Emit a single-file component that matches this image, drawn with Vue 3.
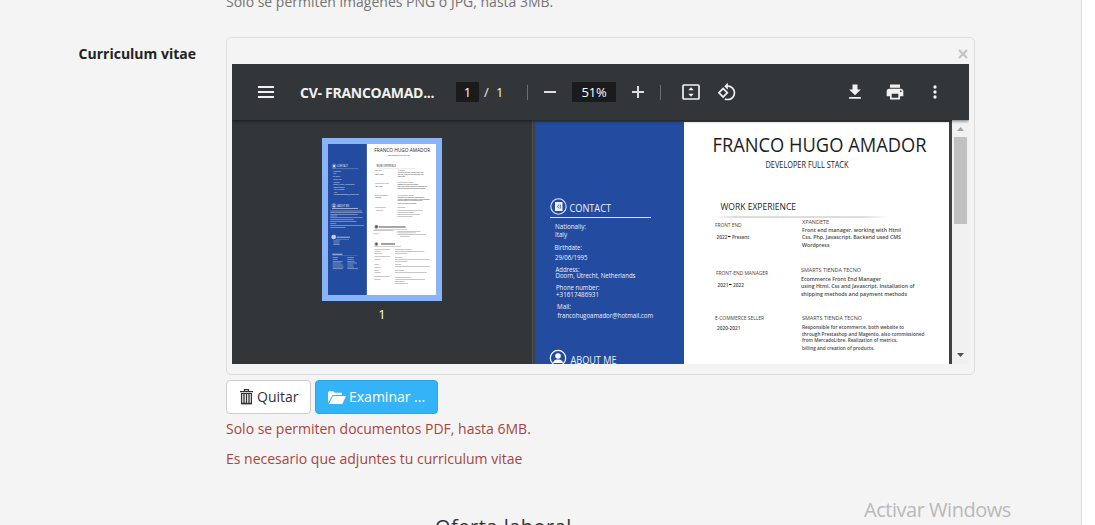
<script setup>
const contact = [
  ['Nationaliy:', 555, 229, 31],
  ['Italy', 555, 237, 12],
  ['Birthdate:', 554.5, 250, 27.5],
  ['29/06/1995', 555, 260, 32.5],
  ['Address:', 555.5, 272, 24],
  ['Doorn, Utrecht, Netherlands', 555.5, 278, 80],
  ['Phone number:', 556, 290, 43.5],
  ['+31617486931', 556, 297, 43],
  ['Mail:', 557, 309, 14],
  ['francohugoamador@hotmail.com', 557.5, 318, 95.5]
]

const roles = [
  ['FRONT END', 715, 227, 26.5],
  ['FRONT-END MANAGER', 716, 275, 52],
  ['E-COMMERCE SELLER', 715, 320, 49]
]

const jobs = [
  ['2022', 716.5, 239.2, 11],
  ['Present', 732, 239.2, 17],
  ['2021', 717.5, 287.2, 11],
  ['2022', 733, 287.2, 11],
  ['2020-2021', 717, 330.2, 23.5],
  ['Front end manager, working with Html', 802, 232, 99],
  ['Css, Php, Javascript. Backend used CMS', 802, 239, 99],
  ['Wordpress', 802, 247, 27.5],
  ['Ecommerce Front End Manager', 801, 281, 80],
  ['using Html, Css and Javascript. Installation of', 801, 288, 113.5],
  ['shipping methods and payment methods', 801, 296, 106],
  ['Responsible for ecommerce, both website to', 802, 329.3, 102],
  ['through Prestashop and Magento, also commissioned', 802, 335.5, 122.5],
  ['from MercadoLibre. Realization of metrics,', 802, 342.3, 95.5],
  ['billing and creation of products.', 802, 350.3, 72.5]
]

const companies = [
  ['XPANDETE', 802, 224.2, 27],
  ['SMARTS TIENDA TECNO', 801, 272.2, 60],
  ['SMARTS TIENDA TECNO', 802, 320.2, 60]
]

/* Lower part of the page: text lines as [x, y, width] */
const leftLines = [
  [61, -28, 95], [61, -24, 97], [61, -18, 82], [61, -13, 20], [61, -8, 97], [61, -2, 70],
  [61, 3, 78], [61, 9, 18], [61, 15, 101], [61, 21, 45],
  [70, 62, 20], [70, 68, 18], [70, 73, 19],
  [68, 112, 16], [68, 118, 15], [68, 124, 30], [68, 128, 26], [68, 134, 30], [68, 140, 33], [68, 145, 31],
  [112, 112, 20], [112, 118, 19], [112, 124, 22], [112, 128, 29], [112, 134, 18], [112, 140, 20], [112, 145, 32]
]

const rightLines = [
  [195, -38, 33], [197, -29, 22], [262, -38, 23], [262, -29, 76], [262, -23, 50], [262, -17, 68], [262, -11, 45],
  [189, 31, 61], [189, 41, 17], [262, 34, 70], [262, 38, 55], [262, 43, 85], [270, 49, 28],
  [193, 88, 47], [193, 94, 19], [193, 100, 24], [193, 109, 47], [193, 118, 19], [193, 133, 14],
  [193, 141, 19], [193, 151, 14], [193, 157, 19], [193, 169, 47], [193, 178, 19],
  [255, 88, 50], [255, 94, 88], [255, 100, 37], [255, 112, 22], [255, 118, 105], [255, 124, 37],
  [255, 133, 18], [255, 139, 105], [255, 151, 27], [255, 157, 95], [255, 172, 47], [255, 178, 90],
  [255, 184, 29], [255, 190, 39]
]
</script>

<template>
  <div class="page">
    <main class="panel">
      <p class="help first">Solo se permiten imágenes PNG o JPG, hasta 3MB.</p>
      <div class="row">
        <label class="label">Curriculum vitae</label>
        <div class="field">
          <div class="preview">
            <div class="close-row">
              <svg width="10" height="10" viewBox="0 0 10 10"><path d="M1 1l8 8M9 1l-8 8" stroke="#c3c3c3" stroke-width="2.200" /></svg>
            </div>
            <div class="viewer">
              <div class="toolbar">
                <svg class="menu" width="16" height="12"><path d="M0 1h16M0 6h16M0 11h16" stroke="#f1f1f1" stroke-width="2" /></svg>
                <span class="title">CV- FRANCOAMAD...</span>
                <span class="box num">1</span>
                <span class="slash">/</span>
                <span class="total">1</span>
                <i class="sep"></i>
                <svg class="minus" width="12" height="12"><path d="M0 6h12" stroke="#dedede" stroke-width="2" /></svg>
                <span class="box zoom">51%</span>
                <svg class="plus" width="12" height="12"><path d="M0 6h12M6 0v12" stroke="#dedede" stroke-width="2" /></svg>
                <i class="sep second"></i>
                <svg class="fit" width="18" height="16" viewBox="0 0 18 16">
                  <rect x="1" y="1" width="16" height="14" rx="1" fill="none" stroke="#f1f1f1" stroke-width="1.700" />
                  <path d="M9 3.300l2.700 3H6.300zM9 12.700l2.700-3H6.300z" fill="#f1f1f1" />
                </svg>
                <svg class="rotate" width="20" height="20" viewBox="0 0 24 24">
                  <path fill="#f1f1f1" d="M7.340 6.410L.86 12.900l6.490 6.480 6.490-6.480-6.500-6.490zM3.690 12.900l3.660-3.660L11 12.900l-3.660 3.660-3.650-3.660zm15.670-6.260A8.950 8.950 0 0013 4V.76L8.760 5 13 9.240V6c1.790 0 3.580.68 4.950 2.050a7.007 7.007 0 010 9.900 6.973 6.973 0 01-7.790 1.440l-1.490 1.490C10.020 21.620 11.510 22 13 22c2.300 0 4.610-.88 6.360-2.640a8.980 8.980 0 000-12.720z" />
                </svg>
                <svg class="download" width="20" height="20" viewBox="0 0 24 24"><path fill="#f1f1f1" d="M19 9h-4V3H9v6H5l7 7 7-7zM5 18v2h14v-2z" /></svg>
                <svg class="print" width="20" height="20" viewBox="0 0 24 24"><path fill="#f1f1f1" d="M19 8H5c-1.660 0-3 1.340-3 3v6h4v4h12v-4h4v-6c0-1.660-1.340-3-3-3zm-3 11H8v-5h8v5zm3-7a1 1 0 110-2 1 1 0 010 2zM18 3H6v4h12V3z" /></svg>
                <svg class="more" width="20" height="20" viewBox="0 0 24 24"><g fill="#f1f1f1"><circle cx="12" cy="6" r="2" /><circle cx="12" cy="12" r="2" /><circle cx="12" cy="18" r="2" /></g></svg>
              </div>
              <div class="content">
                <aside class="side">
                  <div class="thumb">
                    <svg width="108" height="151" viewBox="535 122 414 579" preserveAspectRatio="none"><use href="#resume" /></svg>
                  </div>
                  <span class="thumb-no">1</span>
                </aside>
                <div class="stage">
                  <svg class="doc" width="414" height="579" viewBox="535 122 414 579">
                    <defs>
                      <linearGradient id="fade"><stop offset="0" stop-color="#bbb" stop-opacity="0" /><stop offset=".12" stop-color="#bbb" /><stop offset=".85" stop-color="#bbb" /><stop offset="1" stop-color="#bbb" stop-opacity="0" /></linearGradient>
                    </defs>
                    <g id="resume">
                      <rect x="535" y="122" width="414" height="579" fill="#fff" />
                      <rect x="535" y="122" width="149" height="579" fill="#234ca0" />
                      <text class="dark" x="712.500" y="152.300" font-size="20" textLength="214" lengthAdjust="spacingAndGlyphs">FRANCO HUGO AMADOR</text>
                      <text class="mid" x="765.500" y="168" font-size="8.500" textLength="83" lengthAdjust="spacingAndGlyphs">DEVELOPER FULL STACK</text>
                      <text class="mid" x="720.500" y="210" font-size="9.800" textLength="75.500" lengthAdjust="spacingAndGlyphs">WORK EXPERIENCE</text>
                      <rect x="714" y="216.500" width="174" height="1" fill="url(#fade)" />
                      <text v-for="(t, i) in roles" :key="'r' + i" class="soft" :x="t[1]" :y="t[2]" font-size="5.400" :textLength="t[3]" lengthAdjust="spacingAndGlyphs">{{ t[0] }}</text>
                      <text v-for="(t, i) in companies" :key="'c' + i" class="soft" :x="t[1]" :y="t[2]" font-size="5.800" :textLength="t[3]" lengthAdjust="spacingAndGlyphs">{{ t[0] }}</text>
                      <text v-for="(t, i) in jobs" :key="'j' + i" class="body" :x="t[1]" :y="t[2]" font-size="5.900" :textLength="t[3]" lengthAdjust="spacingAndGlyphs">{{ t[0] }}</text>
                      <path d="M728 236.500h2.500M729 284.500h2.500" stroke="#000" stroke-width="1.200" />

                      <circle cx="558.500" cy="206.500" r="7.700" fill="none" stroke="#dfe6f5" stroke-width="1.100" />
                      <rect x="555" y="202" width="7.500" height="9" fill="#eef2fb" />
                      <path d="M559 204.500l-1.500 2 1.500 2M560.300 204.500v4" fill="none" stroke="#234ca0" stroke-width=".8" />
                      <text class="light" x="569.500" y="212" font-size="10.500" textLength="41.500" lengthAdjust="spacingAndGlyphs">CONTACT</text>
                      <rect x="550" y="217" width="101" height="1" fill="#dfe6f5" />
                      <text v-for="(t, i) in contact" :key="'k' + i" class="light" :x="t[1]" :y="t[2]" font-size="6.300" :textLength="t[3]" lengthAdjust="spacingAndGlyphs">{{ t[0] }}</text>

                      <circle cx="558" cy="358" r="7.700" fill="none" stroke="#fff" stroke-width="1.200" />
                      <circle cx="558" cy="356" r="2.800" fill="#fff" />
                      <path d="M553 363q.5-3 3.500-3.500h3q3 .5 3.500 3.500z" fill="#fff" />
                      <text class="light" x="570.500" y="364" font-size="10.500" textLength="46" lengthAdjust="spacingAndGlyphs">ABOUT ME</text>

                      <g transform="translate(466 413.300) scale(1.278)">
                        <g fill="#fff" opacity=".5">
                          <rect v-for="(l, i) in leftLines" :key="'l' + i" :x="l[0]" :y="l[1]" :width="l[2]" height="2.200" />
                        </g>
                        <g fill="#555" opacity=".6">
                          <rect v-for="(l, i) in rightLines" :key="'m' + i" :x="l[0]" :y="l[1]" :width="l[2]" height="1.600" />
                        </g>
                        <g fill="#dfe6f5">
                          <rect x="66" y="-36" width="78" height="2" />
                          <circle cx="71" cy="51" r="7" opacity=".85" />
                          <rect x="80" y="50" width="40" height="4" opacity=".55" />
                          <rect x="78" y="57" width="39" height="1.500" opacity=".55" />
                          <rect x="67" y="101" width="30" height="4" opacity=".6" />
                          <rect x="67" y="106" width="76" height="1" opacity=".5" />
                        </g>
                        <g fill="#444">
                          <circle cx="199" cy="20" r="6" fill="#999" /><circle cx="199" cy="20" r="3" />
                          <circle cx="199" cy="72" r="6" fill="#aaa" /><circle cx="199" cy="72" r="3" />
                          <rect x="206" y="19" width="81" height="4" opacity=".7" />
                          <rect x="193" y="27" width="98" height="1.500" opacity=".5" />
                          <rect x="213" y="70" width="42" height="4" opacity=".75" />
                          <rect x="193" y="78" width="80" height="1.500" opacity=".5" />
                        </g>
                      </g>
                    </g>
                  </svg>
                </div>
                <div class="scroll">
                  <svg width="17" height="244">
                    <rect x="2" y="17" width="13" height="87" fill="#c1c1c1" />
                    <path d="M5 11h7L8.500 7z" fill="#a3a3a3" />
                    <path d="M5 233h7l-3.500 4z" fill="#505050" />
                  </svg>
                </div>
              </div>
            </div>
          </div>
          <div class="buttons">
            <button class="btn remove">
              <svg width="13" height="16" viewBox="0 0 13 16"><path d="M4.500 2V.7h4V2M0 2.700h13" fill="none" stroke="#333" stroke-width="1.300" /><path d="M1.600 4.500v10h9.800v-10M4 5v9M6.500 5v9M9 5v9" fill="none" stroke="#333" stroke-width="1.300" /><path d="M1 4.500h11M1.500 14.700h10" stroke="#333" /></svg>
              <span>Quitar</span>
            </button>
            <button class="btn browse">
              <svg width="18" height="13" viewBox="0 0 18 13"><path d="M0 12V1.500L1 .3h4.500l1 1.500H14V4H4.500zM5 5h13l-3.700 8H1z" fill="#fff" /></svg>
              <span>Examinar ...</span>
            </button>
          </div>
          <p class="help error">Solo se permiten documentos PDF, hasta 6MB.</p>
          <p class="help error again">Es necesario que adjuntes tu curriculum vitae</p>
        </div>
      </div>
      <h2>Oferta laboral</h2>
    </main>
    <div class="watermark">Activar Windows</div>
  </div>
</template>

<style>
body { overflow: hidden; background: #fff; }
</style>

<style scoped>
* { box-sizing: border-box; }
.page { position: relative; width: 1095px; height: 525px; overflow: hidden; font: 14px/20px "Open Sans", "Noto Sans", sans-serif; color: #333; }
.panel { width: 1082px; height: 525px; overflow: hidden; background: #f4f4f4; border-right: 1px solid #ddd; }
.help { margin: 0; color: #737373; white-space: nowrap; }
.help.first { margin: -8px 0 25px 226px; }
.row { display: flex; }
.label { width: 196px; margin: 7px 30px 0 0; text-align: right; font-weight: 700; font-size: 14px; color: #222; }
.field { width: 749px; }
.preview { height: 338px; border: 1px solid #ddd; border-radius: 5px; padding: 5px; }
.close-row { height: 21px; display: flex; justify-content: flex-end; align-items: center; padding: 0 1px 0 0; }
.viewer { height: 300px; overflow: hidden; background: #323639; }
.toolbar { position: relative; z-index: 1; height: 56px; display: flex; align-items: center; background: #323639; color: #f1f1f1; box-shadow: 0 1px 3px rgba(0, 0, 0, .55); font-size: 13px; white-space: nowrap; }
.toolbar > * { flex: none; }
.menu { margin-left: 26px; }
.title { margin-left: 26px; padding-top: 2px; width: 156px; font-size: 14px; font-weight: 700; letter-spacing: -.28px; }
.box { height: 20px; background: #191b1c; text-align: center; color: #fff; line-height: 21px; }
.num { width: 23px; }
.slash { width: 17px; padding-left: 5px; }
.total { width: 31px; }
.sep { width: 1px; height: 15px; background: #6c6f71; }
.minus { margin: 0 16px; }
.zoom { width: 44px; font-size: 13px; letter-spacing: -.2px; }
.plus { margin: 0 16px; }
.fit { margin: 0 17px 0 21px; }
.rotate { margin-right: 108px; }
.print { margin: 0 20px; }
.content { height: 244px; display: flex; }
.side { width: 300px; display: flex; flex-direction: column; align-items: center; padding-top: 18px; }
.thumb { width: 120px; height: 163px; border: 6px solid #8ab4f8; }
.thumb svg { display: block; }
.thumb-no { color: #fff; font-size: 13px; margin-top: 3px; line-height: 20px; }
.stage { width: 420px; height: 244px; overflow: hidden; padding: 2px 3px 0; border-left: 1px solid #4c5053; background: #3d4144; }
.doc { display: block; margin-left: -1px; }
.scroll { width: 17px; background: #f1f1f1; }
.scroll svg { display: block; }
text { font-family: "Open Sans", "Noto Sans", sans-serif; }
.dark { fill: #1d1d1f; }
.mid { fill: #222; }
.soft { fill: #444; }
.body { fill: #484848; font-weight: 600; }
.light { fill: #eef2fc; }
.thumb text { font-weight: 400; }
.buttons { display: flex; gap: 4px; margin-top: 5px; }
.btn { height: 34px; display: flex; align-items: center; border-radius: 4px; padding: 0 0 0 13px; font: 14px/20px "Open Sans", sans-serif; color: #333; white-space: nowrap; }
.remove { width: 85px; background: #fff; border: 1px solid #ccc; gap: 4px; }
.browse { width: 123px; background: #35b3f8; border: 1px solid #1dabf7; color: #fff; padding-left: 12px; gap: 3px; }
.error { margin-top: 5px; color: #a94442; }
.error.again { margin-top: 10px; }
h2 { margin: 43px 0 0 435px; font-size: 20px; line-height: 30px; font-weight: 400; letter-spacing: .5px; color: #333; white-space: nowrap; }
.watermark { position: absolute; left: 864px; top: 496px; font-size: 20px; line-height: 28px; color: #b9b9b9; white-space: nowrap; letter-spacing: -.47px; }
</style>
